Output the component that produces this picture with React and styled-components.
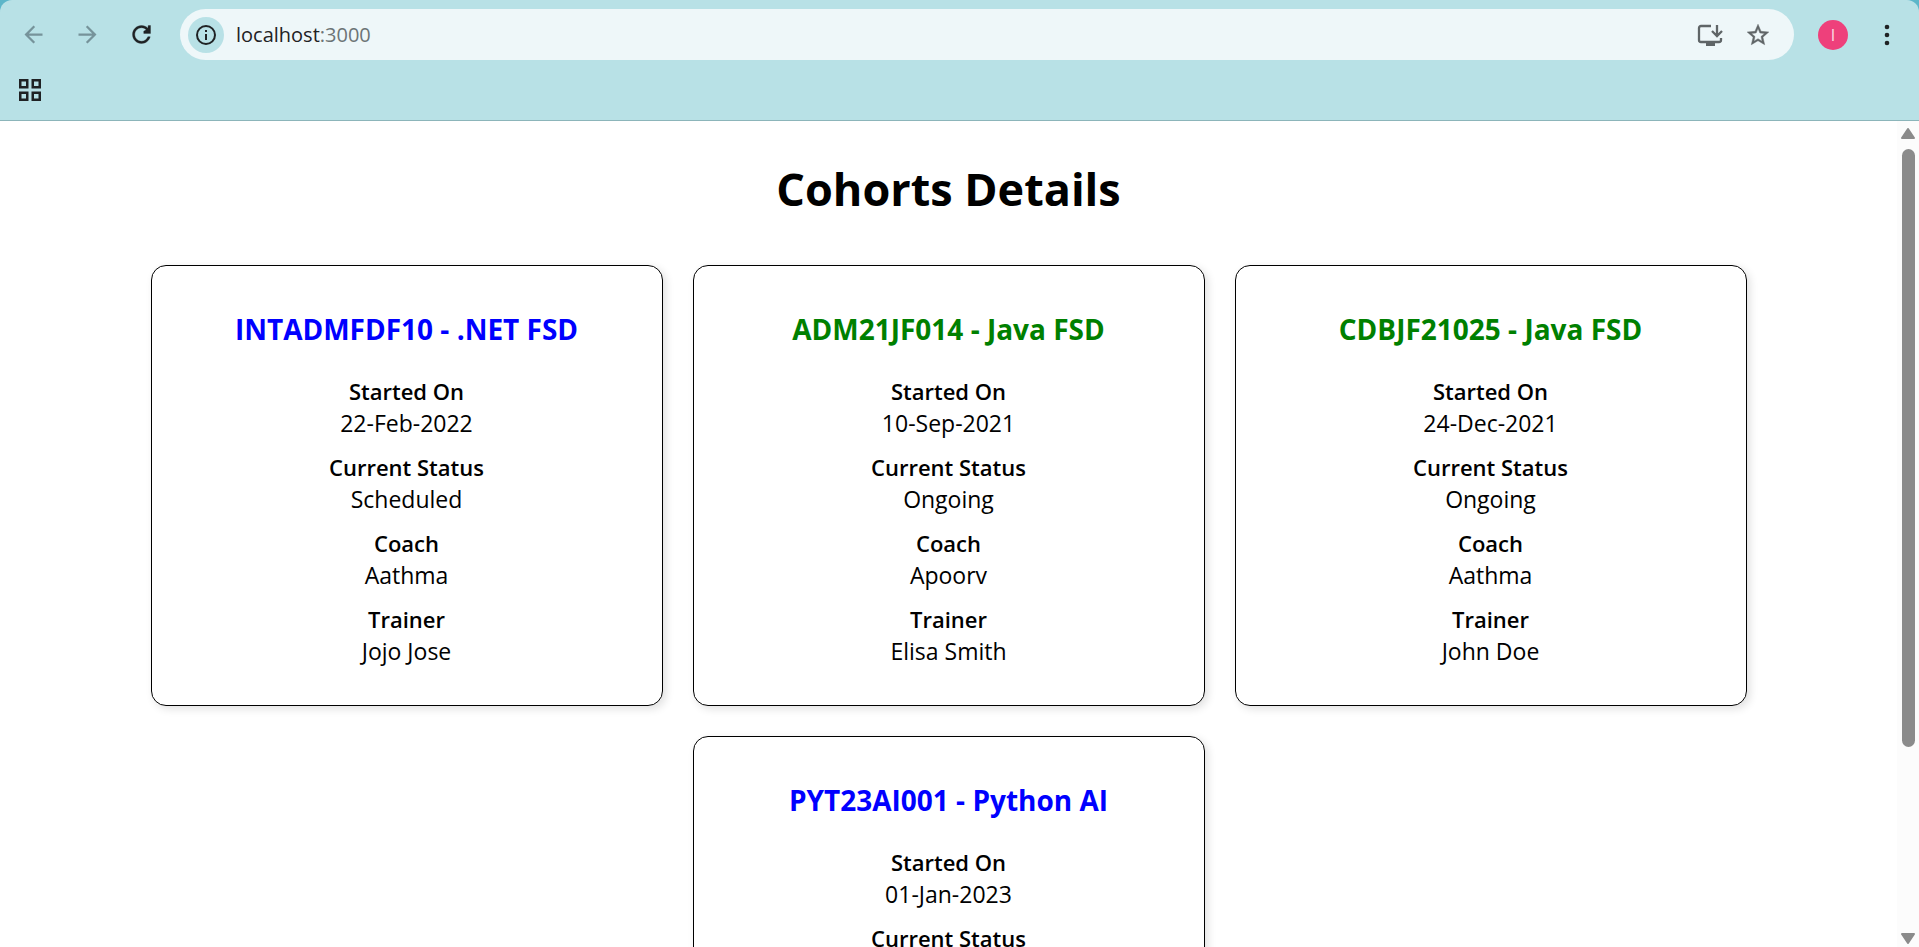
import React from "react";
import styled, { createGlobalStyle } from "styled-components";

const GlobalStyle = createGlobalStyle`
  *, *::before, *::after { box-sizing: border-box; }
  body {
    margin: 0;
    background: #5db6c9;
    color: #000;
    font-family: "Segoe UI", "Open Sans", "Noto Sans", sans-serif;
  }
`;

const Window = styled.div`
  display: flex;
  flex-direction: column;
  height: 100vh;
  overflow: hidden;
`;

const BrowserHeader = styled.header`
  flex: none;
  background: #b8e1e6;
  border-bottom: 1px solid #8cb5ba;
  border-radius: 12px 12px 0 0;
  color: #1f2224;
`;

const Toolbar = styled.div`
  display: flex;
  align-items: center;
  gap: 24px;
  padding: 9px 17px 9px 18px;
`;

const IconButton = styled.button`
  display: flex;
  align-items: center;
  justify-content: center;
  flex: none;
  width: 30px;
  height: 30px;
  padding: 0;
  border: 0;
  border-radius: 50%;
  background: none;
  color: ${(p) => p.$color || "inherit"};
`;

const AddressBar = styled.div`
  display: flex;
  align-items: center;
  flex: 1;
  gap: 18px;
  height: 51px;
  padding: 0 21px 0 8px;
  border-radius: 26px;
  background: #eef7f9;
`;

const SiteInfo = styled(IconButton)`
  width: 36px;
  height: 36px;
  background: #b8e1e6;
`;

const Address = styled.div`
  flex: 1;
  margin-left: -6px;
  font-size: 20px;
  line-height: 28px;
`;

const Port = styled.span`
  color: #6c7476;
`;

const Avatar = styled(IconButton)`
  background: #ee407b;
  color: #fbdde7;
  font: 16px/30px "Open Sans", sans-serif;
`;

const Bookmarks = styled.nav`
  display: flex;
  align-items: center;
  height: 51px;
  padding: 0 15px 9px;
`;

const Viewport = styled.div`
  display: flex;
  flex: 1;
  min-height: 0;
  background: #fff;
`;

const Page = styled.main`
  flex: 1;
  overflow-y: auto;
  scrollbar-width: none;
  text-align: center;
`;

const PageTitle = styled.h1`
  margin: 34px 0 42px;
  font-size: 45px;
  font-weight: 700;
  line-height: 68px;
`;

const CardList = styled.div`
  display: flex;
  flex-wrap: wrap;
  justify-content: center;
  gap: 30px;
  padding-bottom: 30px;
`;

const Card = styled.article`
  width: 27%;
  max-width: 512px;
  padding: 39px 30px 38px;
  border: 1px solid #000;
  border-radius: 15px;
  box-shadow: 3px 3px 8px rgba(0, 0, 0, 0.12);
`;

const CardTitle = styled.h2`
  margin: 0 0 22px;
  color: ${(p) => (p.$ongoing ? "green" : "blue")};
  font-size: 28px;
  font-weight: 700;
  line-height: 48px;
`;

const Details = styled.dl`
  display: grid;
  gap: 12px;
  margin: 0;
  line-height: 32px;
`;

const Term = styled.dt`
  font-size: 22px;
  font-weight: 600;
`;

const Value = styled.dd`
  margin: 0;
  font-size: 23px;
`;

const Scrollbar = styled.div`
  display: flex;
  flex-direction: column;
  align-items: center;
  flex: none;
  width: 22px;
  padding: 7px 0 3px;
  background: #fcfcfc;
  color: #8b8b8b;
`;

const Track = styled.div`
  flex: 1;
  width: 13px;
  margin: 10px 0 8px;
`;

const Thumb = styled.div`
  height: 77%;
  border-radius: 7px;
  background: #8b8b8b;
`;

const cohorts = [
  { code: "INTADMFDF10", name: ".NET FSD", started: "22-Feb-2022", status: "Scheduled", coach: "Aathma", trainer: "Jojo Jose" },
  { code: "ADM21JF014", name: "Java FSD", started: "10-Sep-2021", status: "Ongoing", coach: "Apoorv", trainer: "Elisa Smith" },
  { code: "CDBJF21025", name: "Java FSD", started: "24-Dec-2021", status: "Ongoing", coach: "Aathma", trainer: "John Doe" },
  { code: "PYT23AI001", name: "Python AI", started: "01-Jan-2023", status: "Scheduled", coach: "Apoorv", trainer: "Elisa Smith" },
];

function BackIcon() {
  return (
    <svg width="27" height="27" viewBox="0 0 24 24" fill="currentColor">
      <path d="M20 11H7.83l5.59-5.59L12 4l-8 8 8 8 1.41-1.41L7.83 13H20z" />
    </svg>
  );
}

function ForwardIcon() {
  return (
    <svg width="27" height="27" viewBox="0 0 24 24" fill="currentColor">
      <path d="M4 11h12.17l-5.59-5.59L12 4l8 8-8 8-1.41-1.41L16.17 13H4z" />
    </svg>
  );
}

function ReloadIcon() {
  return (
    <svg width="27" height="27" viewBox="0 0 24 24" fill="currentColor" stroke="currentColor" strokeWidth=".3">
      <path d="M17.650 6.350C16.200 4.900 14.210 4 12 4c-4.420 0-7.990 3.580-7.990 8s3.570 8 7.990 8c3.730 0 6.840-2.550 7.730-6h-2.080c-.820 2.330-3.040 4-5.650 4-3.310 0-6-2.690-6-6s2.690-6 6-6c1.660 0 3.140.690 4.220 1.780L14 9v2h6V4h-2z" />
    </svg>
  );
}

function InfoIcon() {
  return (
    <svg width="24" height="24" viewBox="0 0 24 24" fill="currentColor">
      <path d="M11 11h2v6h-2zM11 7h2v2h-2z" />
      <circle cx="12" cy="12" r="9" fill="none" stroke="currentColor" strokeWidth="2" />
    </svg>
  );
}

function InstallIcon() {
  return (
    <svg width="26" height="24" viewBox="0 0 26 24" fill="none" stroke="currentColor" strokeWidth="2.300">
      <path d="M14 3H4a2 2 0 0 0-2 2v12a2 2 0 0 0 2 2h18a2 2 0 0 0 2-2v-2M20 2v10M15 8l5 5 5-5" />
      <path d="M9 20h9v3H9z" fill="currentColor" stroke="none" />
    </svg>
  );
}

function StarIcon() {
  return (
    <svg width="26" height="26" viewBox="0 0 24 24" fill="currentColor" stroke="currentColor" strokeWidth=".4">
      <path d="M22 9.240l-7.190-.620L12 2 9.190 8.630 2 9.240l5.460 4.730L5.820 21 12 17.270 18.180 21l-1.630-7.030zM12 15.400l-3.760 2.270 1-4.280-3.320-2.880 4.380-.380L12 6.100l1.710 4.040 4.380.380-3.320 2.880 1 4.280z" />
    </svg>
  );
}

function MenuIcon() {
  return (
    <svg width="24" height="24" viewBox="0 0 24 24" fill="currentColor">
      <circle cx="12" cy="4" r="2.300" />
      <circle cx="12" cy="12" r="2.300" />
      <circle cx="12" cy="20" r="2.300" />
    </svg>
  );
}

function AppsIcon() {
  return (
    <svg width="22" height="22" viewBox="0 0 22 22" fill="none" stroke="currentColor" strokeWidth="2.500">
      <path d="M1.250 1.250h7v7h-7zM13.750 1.250h7v7h-7zM1.250 13.750h7v7h-7zM13.750 13.750h7v7h-7z" />
    </svg>
  );
}

function ScrollArrow({ down }) {
  return (
    <svg width="14" height="11" viewBox="0 0 14 11" fill="currentColor" stroke="currentColor" strokeWidth="2" strokeLinejoin="round">
      <path d={down ? "M1 1h12L7 10z" : "M1 10h12L7 1z"} />
    </svg>
  );
}

function Detail({ label, children }) {
  return (
    <div>
      <Term>{label}</Term>
      <Value>{children}</Value>
    </div>
  );
}

function CohortCard({ cohort }) {
  return (
    <Card>
      <CardTitle $ongoing={cohort.status === "Ongoing"}>
        {cohort.code} - {cohort.name}
      </CardTitle>
      <Details>
        <Detail label="Started On">{cohort.started}</Detail>
        <Detail label="Current Status">{cohort.status}</Detail>
        <Detail label="Coach">{cohort.coach}</Detail>
        <Detail label="Trainer">{cohort.trainer}</Detail>
      </Details>
    </Card>
  );
}

export default function App() {
  return (
    <Window>
      <GlobalStyle />
      <BrowserHeader>
        <Toolbar>
          <IconButton $color="#76939a" aria-label="Back"><BackIcon /></IconButton>
          <IconButton $color="#76939a" aria-label="Forward"><ForwardIcon /></IconButton>
          <IconButton aria-label="Reload"><ReloadIcon /></IconButton>
          <AddressBar>
            <SiteInfo aria-label="Site information"><InfoIcon /></SiteInfo>
            <Address>localhost<Port>:3000</Port></Address>
            <IconButton $color="#5f6567" aria-label="Install app"><InstallIcon /></IconButton>
            <IconButton $color="#5f6567" aria-label="Bookmark"><StarIcon /></IconButton>
          </AddressBar>
          <Avatar aria-label="Profile">I</Avatar>
          <IconButton aria-label="Menu"><MenuIcon /></IconButton>
        </Toolbar>
        <Bookmarks>
          <IconButton aria-label="Apps"><AppsIcon /></IconButton>
        </Bookmarks>
      </BrowserHeader>
      <Viewport>
        <Page>
          <PageTitle>Cohorts Details</PageTitle>
          <CardList>
            {cohorts.map((cohort) => (
              <CohortCard key={cohort.code} cohort={cohort} />
            ))}
          </CardList>
        </Page>
        <Scrollbar aria-hidden="true">
          <ScrollArrow />
          <Track><Thumb /></Track>
          <ScrollArrow down />
        </Scrollbar>
      </Viewport>
    </Window>
  );
}
